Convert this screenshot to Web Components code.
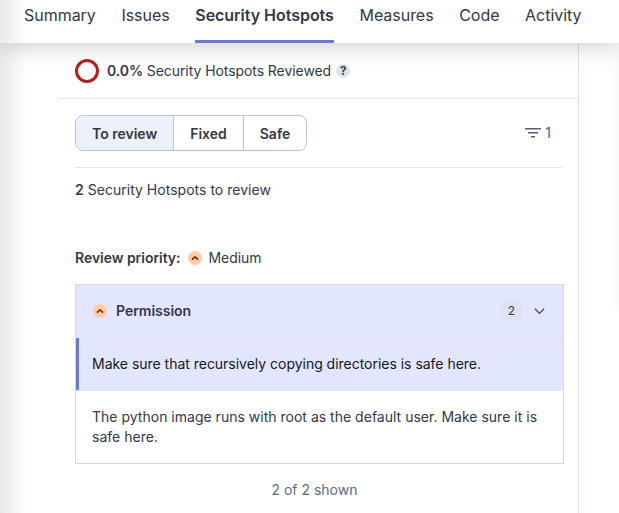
<!DOCTYPE html>
<html lang="en">
<head>
<meta charset="utf-8">
<title>Security Hotspots</title>
<style>
html, body { margin: 0; height: 100%; overflow: hidden; background: #fff; }
body { font: 14px/20px Inter, "Liberation Sans", sans-serif; color: #333849; }
</style>
</head>
<body>
<hotspots-page></hotspots-page>
<script>
const define = (name, html) => {
  const template = document.createElement('template');
  template.innerHTML = '<style>*{box-sizing:border-box}:host{box-sizing:border-box}</style>' + html;
  customElements.define(name, class extends HTMLElement {
    constructor() {
      super();
      this.attachShadow({ mode: 'open' }).append(template.content.cloneNode(true));
    }
  });
};

define('nav-tab', `
<style>
:host { display: block; height: 43px; padding-top: 3px; font-size: 16px; line-height: 24px; white-space: nowrap; letter-spacing: -.03px; }
:host([active]) { font-weight: 600; border-bottom: 3px solid #6a79d2; }
</style><slot></slot>`);

define('nav-bar', `
<style>
:host { display: flex; gap: 25.6px; height: 43px; padding-left: 24px; background: #fff; box-shadow: 0 4px 22px rgba(0,0,0,.18); position: relative; z-index: 1; }
</style><slot></slot>`);

define('review-ring', `
<style>:host { display: block; width: 24px; height: 24px; border: 3px solid #b4201c; border-radius: 50%; }</style>`);

define('help-badge', `
<style>:host { display: block; width: 14px; height: 14px; border-radius: 50%; background: #dde3f1; font-size: 11.5px; line-height: 14px; font-weight: 700; text-align: center; }</style>?`);

define('priority-icon', `
<style>:host { display: block; width: 14px; height: 14px; } svg { display: block; }</style>
<svg width="14" height="14" viewBox="0 0 14 14"><circle cx="7" cy="7" r="7" fill="#fecda6"/><path d="M3.9 8.7 7 5.8l3.1 2.9" fill="none" stroke="#842c14" stroke-width="1.7"/></svg>`);

define('toggle-option', `
<style>
:host { display: block; padding: 0 16px; line-height: 36px; font-weight: 600; border-left: 1px solid #b7c3d9; white-space: nowrap; }
:host(:first-child) { border-left: 0; }
:host([selected]) { background: #ecf0f9; }
</style><slot></slot>`);

define('toggle-group', `
<style>:host { display: flex; height: 36px; border: 1px solid #b7c3d9; border-radius: 8px; overflow: hidden; }</style><slot></slot>`);

define('filter-count', `
<style>:host { display: flex; align-items: center; gap: 4px; color: #54617d; } svg { display: block; }</style>
<svg width="16" height="12" viewBox="0 0 16 12"><path d="M0 1.8h16M3 5.8h10M6 9.8h4" stroke="#54617d" stroke-width="1.5"/></svg><span><slot></slot></span>`);

define('hotspot-group', `
<style>
:host { display: block; border: 1px solid #d5d8dc; }
header { display: flex; align-items: center; height: 53px; padding: 0 18px 0 17px; background: #e2e6fe; border-bottom: 1px solid #e5e6ec; }
strong { flex: 1; margin-left: 9px; font-weight: 600; letter-spacing: -.02px; }
.count { width: 23px; height: 20px; border-radius: 11px; background: #dde3ee; font-size: 12px; text-align: center; margin-right: 11px; }
</style>
<header><priority-icon></priority-icon><strong><slot name="title"></slot></strong><span class="count"><slot name="count"></slot></span>
<svg width="11" height="7" viewBox="0 0 11 7"><path d="M.9.8 5.5 5.4 10.1.8" fill="none" stroke="#434a60" stroke-width="1.3"/></svg></header>
<slot></slot>`);

define('hotspot-item', `
<style>
:host { display: block; padding: 16px; min-height: 52px; letter-spacing: .01px; }
:host([selected]) { background: linear-gradient(#e2e6fe, #e2e6fe) padding-box; color: #151924; box-shadow: inset 3px 0 #6a79d2; height: 53px; border-bottom: 1px solid #dfe2ec; letter-spacing: -.02px; }
</style><slot></slot>`);

define('hotspots-page', `
<style>
:host { display: block; height: 513px; overflow: hidden; position: relative; }
b { font-weight: 600; }
main { margin-left: 59px; width: 520px; height: 470px; border-right: 1px solid #d9dff0; }
.summary { display: flex; align-items: center; height: 56px; padding-left: 16px; border-bottom: 1px solid #e1e4e6; }
.summary span { margin: 0 5px 0 8px; letter-spacing: -.07px; }
.body { padding: 0 14px 0 16px; }
.filters { display: flex; align-items: center; justify-content: space-between; height: 69px; margin-right: 2px; padding-right: 11px; border-bottom: 1px solid #e1e4e6; }
.total { margin-top: 12px; letter-spacing: .02px; }
.priority { display: flex; align-items: center; margin: 48px 0 16px; letter-spacing: -.04px; }
.priority priority-icon { margin: 0 6px 0 8px; }
.shown { margin-top: 16px; padding-right: 10px; text-align: center; color: #5d6987; }
.edge { position: absolute; z-index: 2; pointer-events: none; }
.left { left: 0; top: 0; width: 30px; height: 100%; background: linear-gradient(90deg, rgba(0,0,0,.085), rgba(0,0,0,.06) 30%, rgba(0,0,0,.02) 70%, transparent); }
.right { right: 0; top: 43px; width: 14px; height: 268px; background: linear-gradient(90deg, transparent, rgba(0,0,0,.018)); }
</style>
<nav-bar>
<nav-tab>Summary</nav-tab><nav-tab>Issues</nav-tab><nav-tab active>Security Hotspots</nav-tab><nav-tab>Measures</nav-tab><nav-tab>Code</nav-tab><nav-tab>Activity</nav-tab>
</nav-bar>
<main>
<div class="summary"><review-ring></review-ring><span><b>0.0%</b> Security Hotspots Reviewed</span><help-badge></help-badge></div>
<div class="body">
<div class="filters">
<toggle-group><toggle-option selected>To review</toggle-option><toggle-option>Fixed</toggle-option><toggle-option>Safe</toggle-option></toggle-group>
<filter-count>1</filter-count>
</div>
<div class="total"><b>2</b> Security Hotspots to review</div>
<div class="priority"><b>Review priority:</b><priority-icon></priority-icon>Medium</div>
<hotspot-group><span slot="title">Permission</span><span slot="count">2</span>
<hotspot-item selected>Make sure that recursively copying directories is safe here.</hotspot-item>
<hotspot-item>The python image runs with root as the default user. Make sure it is safe here.</hotspot-item>
</hotspot-group>
<div class="shown">2 of 2 shown</div>
</div>
</main>
<div class="edge left"></div><div class="edge right"></div>`);
</script>
</body>
</html>
